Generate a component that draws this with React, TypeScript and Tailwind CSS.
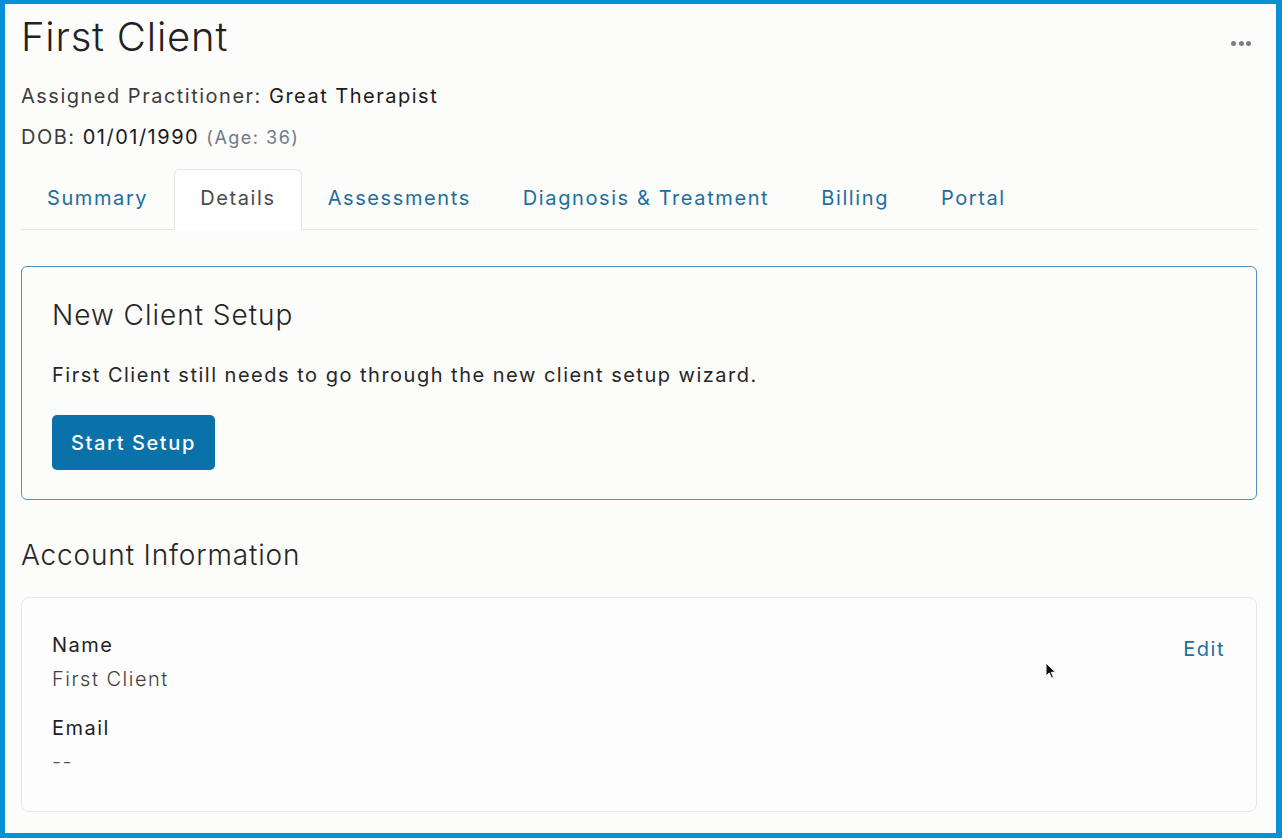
const tabs = ['Summary', 'Details', 'Assessments', 'Diagnosis & Treatment', 'Billing', 'Portal'];

function MoreDots() {
  return (
    <button className="flex items-center gap-[2.5px] mt-[28px] mr-[6px]">
      <span className="w-[5px] h-[5px] rounded-full bg-[#7b7f84]" />
      <span className="w-[5px] h-[5px] rounded-full bg-[#7b7f84]" />
      <span className="w-[5px] h-[5px] rounded-full bg-[#7b7f84]" />
    </button>
  );
}

function Pointer() {
  return (
    <svg className="absolute left-[1040px] top-[658px]" width="12" height="18" viewBox="0 0 12 18">
      <path d="M1 1 L1 14 L4.2 11 L6.6 16.2 L8.6 15.3 L6.3 10.3 L10.6 10.3 Z" fill="#111" stroke="#fff" strokeWidth="1" strokeLinejoin="round" />
    </svg>
  );
}

export default function App() {
  return (
    <div className="relative w-[1282px] h-[838px] overflow-hidden bg-[#fcfcfb] border-[#0790d3] border-l-[5px] border-t-[4px] border-r-[6px] border-b-[5px] font-['Inter','Noto_Sans',sans-serif] text-[#222]">
      <div className="pl-4 pr-[19px] pt-[9px]">
        {/* Header */}
        <div className="flex justify-between items-start">
          <div>
            <h1 className="text-[40px] leading-[48px] font-light tracking-[0.02em] text-[#222]">First Client</h1>
            <p className="mt-5 text-[20px] leading-[30px] tracking-[0.075em] text-[#3d3d3d]">
              Assigned Practitioner: <span className="text-[#1a1a1a]">Great Therapist</span>
            </p>
            <p className="mt-[11px] text-[20px] leading-[30px] tracking-[0.075em] text-[#3d3d3d]">
              DOB: <span className="text-[#1a1a1a]">01/01/1990</span>{' '}
              <span className="text-[18px] text-[#6e7b88]">(Age: 36)</span>
            </p>
          </div>
          <MoreDots />
        </div>

        {/* Tabs */}
        <div className="mt-4 flex border-b border-[#e3e5e7]">
          {tabs.map((t) => (
            <div
              key={t}
              className={
                t === 'Details'
                  ? 'h-[61px] -mb-px pb-1 flex items-center px-[25px] text-[20px] leading-[30px] tracking-[0.08em] text-[#4a4a4a] bg-white border border-b-0 border-[#e3e5e7] rounded-t-md'
                  : 'h-[61px] -mb-px pb-1 flex items-center px-[25px] text-[20px] leading-[30px] tracking-[0.08em] text-[#1b6fa0] border border-transparent'
              }
            >
              {t}
            </div>
          ))}
        </div>

        {/* Setup card */}
        <div className="mt-[36px] border border-[#4d94bd] rounded-md px-[30px] pt-[30px] pb-[29px]">
          <h2 className="text-[28px] leading-[36px] font-light tracking-[0.035em] text-[#262626]">New Client Setup</h2>
          <p className="mt-[27px] text-[20px] leading-[30px] tracking-[0.075em] text-[#262626]">
            First Client still needs to go through the new client setup wizard.
          </p>
          <button className="mt-[25px] h-[55px] px-[19px] rounded-[5px] bg-[#0a72a9] text-white text-[20px] leading-[30px] tracking-[0.08em] font-medium">
            Start Setup
          </button>
        </div>

        {/* Account information */}
        <h2 className="mt-[37px] text-[28px] leading-[36px] font-light tracking-[0.03em] text-[#262626]">Account Information</h2>
        <div className="mt-[24px] border border-[#e6e6e6] rounded-lg bg-[#fdfdfd] pl-[30px] pr-[31px] pt-[32px] pb-[34px] flex justify-between items-start">
          <div className="text-[20px] leading-[30px] tracking-[0.075em]">
            <div className="text-[#1f1f1f]">Name</div>
            <div className="mt-1 font-light text-[#404040]">First Client</div>
            <div className="mt-[19px] text-[#1f1f1f]">Email</div>
            <div className="mt-1 font-light text-[#555]">--</div>
          </div>
          <button className="mt-1 text-[20px] leading-[30px] tracking-[0.075em] text-[#1b6fa0]">Edit</button>
        </div>
      </div>
      <Pointer />
    </div>
  );
}
